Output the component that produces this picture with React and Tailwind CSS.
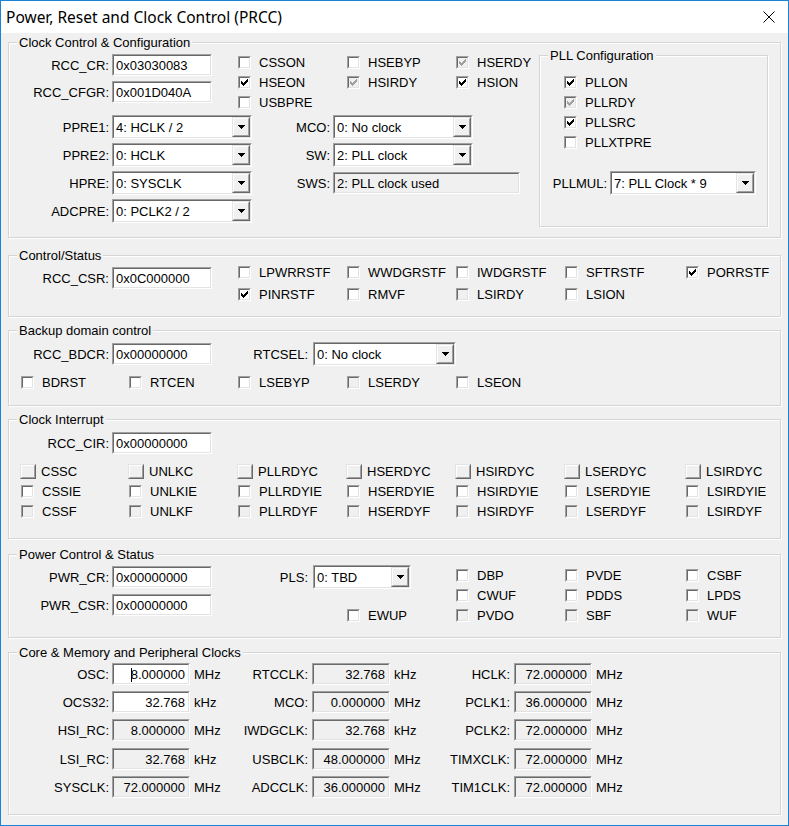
import React from "react";

const sunkOuter = "border border-t-[#a0a0a0] border-l-[#a0a0a0] border-r-white border-b-white";
const sunkInner = "border border-t-[#696969] border-l-[#696969] border-r-[#e3e3e3] border-b-[#e3e3e3]";
const raisedOuter = "border border-t-[#e3e3e3] border-l-[#e3e3e3] border-r-[#696969] border-b-[#696969]";
const raisedInner = "border border-t-white border-l-white border-r-[#a0a0a0] border-b-[#a0a0a0]";

// classic 7x7 pixel check mark
function Tick({ color }) {
  const cols = [2, 3, 4, 3, 2, 1, 0];
  return (
    <svg width="7" height="7" viewBox="0 0 7 7" shapeRendering="crispEdges" className="block">
      {cols.map((y, x) => (
        <rect key={x} x={x} y={y} width="1" height="3" fill={color} />
      ))}
    </svg>
  );
}

function DropArrow() {
  return (
    <svg width="7" height="4" viewBox="0 0 7 4" shapeRendering="crispEdges" className="block">
      <rect x="0" y="0" width="7" height="1" fill="#000" />
      <rect x="1" y="1" width="5" height="1" fill="#000" />
      <rect x="2" y="2" width="3" height="1" fill="#000" />
      <rect x="3" y="3" width="1" height="1" fill="#000" />
    </svg>
  );
}

function Box({ on, dis }) {
  return (
    <div className={`w-[13px] h-[13px] shrink-0 flex ${sunkOuter}`}>
      <div className={`flex-1 flex items-center justify-center ${sunkInner} ${dis ? "bg-[#f0f0f0]" : "bg-white"}`}>
        {on && <Tick color={dis ? "#a0a0a0" : "#000"} />}
      </div>
    </div>
  );
}

function Check({ label, on, dis }) {
  return (
    <div className="h-full flex items-center whitespace-nowrap">
      <Box on={on} dis={dis} />
      <span className="ml-[8px]">{label}</span>
    </div>
  );
}

function Push({ label }) {
  return (
    <div className="h-full flex items-center whitespace-nowrap -ml-[1px]">
      <div className={`w-[16px] h-[15px] shrink-0 flex ${raisedOuter}`}>
        <div className={`flex-1 bg-[#f0f0f0] ${raisedInner}`} />
      </div>
      <span className="ml-[5px]">{label}</span>
    </div>
  );
}

function Edit({ w, value, ro, right, caret }) {
  return (
    <div className={`${w} h-[22px] shrink-0 flex ${sunkOuter}`}>
      <div
        className={`flex-1 min-w-0 flex items-center whitespace-nowrap ${sunkInner} ${
          ro ? "bg-[#f0f0f0]" : "bg-white"
        } ${right ? "justify-end pr-[3px]" : "pl-[2px]"}`}
      >
        <span className="relative">
          {caret && <span className="absolute left-0 top-[1px] w-px h-[14px] bg-black" />}
          {value}
        </span>
      </div>
    </div>
  );
}

function Combo({ w, value }) {
  return (
    <div className={`${w} h-[24px] shrink-0 flex ${sunkOuter}`}>
      <div className={`flex-1 min-w-0 flex bg-white ${sunkInner}`}>
        <div className="flex-1 flex items-center pl-[2px] whitespace-nowrap overflow-hidden">{value}</div>
        <div className={`w-[18px] shrink-0 flex ${raisedOuter}`}>
          <div className={`flex-1 flex items-center justify-center bg-[#f0f0f0] ${raisedInner}`}>
            <DropArrow />
          </div>
        </div>
      </div>
    </div>
  );
}

function Label({ w, children }) {
  return <div className={`${w} shrink-0 text-right whitespace-nowrap`}>{children}</div>;
}

function Group({ title, className, children }) {
  return (
    <div
      className={`relative shrink-0 border border-[#d5d5d5] shadow-[inset_1px_1px_0_#fff,1px_1px_0_#fff] ${className}`}
    >
      <span className="absolute left-[8px] top-[-8px] px-[2px] bg-[#f0f0f0] leading-[15px] whitespace-nowrap">
        {title}
      </span>
      {children}
    </div>
  );
}

function RegField({ label, value }) {
  return (
    <div className="flex items-center h-[22px]">
      <Label w="w-[100px]">{label}</Label>
      <div className="ml-[3px]">
        <Edit w="w-[100px]" value={value} />
      </div>
    </div>
  );
}

// label / read-out / unit triple; widths per column so the boxes line up
const clockCols = [
  { lw: "w-[100px]", gap: "ml-[3px]", uw: "w-[34px]" },
  { lw: "w-[84px]", gap: "ml-[4px]", uw: "w-[40px]" },
  { lw: "w-[80px]", gap: "ml-[4px]", uw: "w-[40px]" },
];

function ClockCell({ col, label, value, unit, ro, caret }) {
  const c = clockCols[col];
  return (
    <div className="flex items-center h-[22px]">
      <Label w={c.lw}>{label}</Label>
      <div className={c.gap}>
        <Edit w="w-[78px]" value={value} ro={ro} right caret={caret} />
      </div>
      <div className={`${c.uw} pl-[4px] shrink-0 whitespace-nowrap`}>{unit}</div>
    </div>
  );
}

export default function App() {
  const interruptRows = [
    ["CSSC", "UNLKC", "PLLRDYC", "HSERDYC", "HSIRDYC", "LSERDYC", "LSIRDYC"],
    ["CSSIE", "UNLKIE", "PLLRDYIE", "HSERDYIE", "HSIRDYIE", "LSERDYIE", "LSIRDYIE"],
    ["CSSF", "UNLKF", "PLLRDYF", "HSERDYF", "HSIRDYF", "LSERDYF", "LSIRDYF"],
  ];

  const clocks = [
    [
      ["OSC:", "8.000000", "MHz", false, true],
      ["OCS32:", "32.768", "kHz", false],
      ["HSI_RC:", "8.000000", "MHz"],
      ["LSI_RC:", "32.768", "kHz"],
      ["SYSCLK:", "72.000000", "MHz"],
    ],
    [
      ["RTCCLK:", "32.768", "kHz"],
      ["MCO:", "0.000000", "MHz"],
      ["IWDGCLK:", "32.768", "kHz"],
      ["USBCLK:", "48.000000", "MHz"],
      ["ADCCLK:", "36.000000", "MHz"],
    ],
    [
      ["HCLK:", "72.000000", "MHz"],
      ["PCLK1:", "36.000000", "MHz"],
      ["PCLK2:", "72.000000", "MHz"],
      ["TIMXCLK:", "72.000000", "MHz"],
      ["TIM1CLK:", "72.000000", "MHz"],
    ],
  ];
  const rowGaps = ["", "mt-[6px]", "mt-[6px]", "mt-[7px]", "mt-[6px]"];

  return (
    <div className="w-[789px] h-[826px] overflow-hidden flex flex-col bg-[#f0f0f0] border border-[#1883d7] text-[13px] leading-[15px] text-black font-['Liberation_Sans',Arial,sans-serif]">
      {/* title bar */}
      <div className="h-[32px] shrink-0 bg-white flex items-center pl-[5px]">
        <span className="text-[15.5px] font-['Noto_Sans',sans-serif] text-black">
          Power, Reset and Clock Control (PRCC)
        </span>
        <svg width="12" height="12" viewBox="0 0 12 12" className="ml-auto mr-[13px] block">
          <path d="M0.5 0.5L11.5 11.5M11.5 0.5L0.5 11.5" stroke="#000" strokeWidth="1" fill="none" />
        </svg>
      </div>

      {/* Clock Control & Configuration */}
      <Group title="Clock Control & Configuration" className="mt-[9px] mx-[7px] h-[196px] flex">
        <div className="w-[530px] shrink-0 pt-[9px] flex flex-col">
          <div className="flex h-[60px]">
            <div className="w-[229px] shrink-0 pt-[2px] flex flex-col gap-[5px]">
              <RegField label="RCC_CR:" value="0x03030083" />
              <RegField label="RCC_CFGR:" value="0x001D040A" />
            </div>
            <div className="grid grid-cols-[109px_109px_109px] auto-rows-[20px]">
              <Check label="CSSON" />
              <Check label="HSEBYP" />
              <Check label="HSERDY" on dis />
              <Check label="HSEON" on />
              <Check label="HSIRDY" on dis />
              <Check label="HSION" on />
              <Check label="USBPRE" />
            </div>
          </div>
          <div className="mt-[1px] flex">
            <div className="w-[243px] shrink-0 flex flex-col">
              {[
                ["PPRE1:", "4: HCLK / 2"],
                ["PPRE2:", "0: HCLK"],
                ["HPRE:", "0: SYSCLK"],
                ["ADCPRE:", "0: PCLK2 / 2"],
              ].map(([l, v]) => (
                <div key={l} className="h-[28px] flex items-center">
                  <Label w="w-[100px]">{l}</Label>
                  <div className="ml-[3px]">
                    <Combo w="w-[140px]" value={v} />
                  </div>
                </div>
              ))}
            </div>
            <div className="flex flex-col">
              <div className="h-[28px] flex items-center">
                <Label w="w-[78px]">MCO:</Label>
                <div className="ml-[3px]">
                  <Combo w="w-[140px]" value="0: No clock" />
                </div>
              </div>
              <div className="h-[28px] flex items-center">
                <Label w="w-[78px]">SW:</Label>
                <div className="ml-[3px]">
                  <Combo w="w-[140px]" value="2: PLL clock" />
                </div>
              </div>
              <div className="h-[28px] flex items-center">
                <Label w="w-[78px]">SWS:</Label>
                <div className="ml-[3px]">
                  <Edit w="w-[187px]" value="2: PLL clock used" ro />
                </div>
              </div>
            </div>
          </div>
        </div>

        <Group title="PLL Configuration" className="mt-[12px] w-[229px] h-[172px] flex flex-col">
          <div className="pt-[16px] pl-[24px] grid auto-rows-[20px]">
            <Check label="PLLON" on />
            <Check label="PLLRDY" on dis />
            <Check label="PLLSRC" on />
            <Check label="PLLXTPRE" />
          </div>
          <div className="mt-[19px] h-[24px] flex items-center">
            <Label w="w-[67px]">PLLMUL:</Label>
            <div className="ml-[3px]">
              <Combo w="w-[146px]" value="7: PLL Clock * 9" />
            </div>
          </div>
        </Group>
      </Group>

      {/* Control/Status */}
      <Group title="Control/Status" className="mt-[17px] mx-[7px] h-[62px] flex">
        <div className="w-[229px] shrink-0 pt-[11px]">
          <RegField label="RCC_CSR:" value="0x0C000000" />
        </div>
        <div className="pt-[5px] grid grid-cols-[109px_109px_109px_121px_80px] auto-rows-[22px]">
          <Check label="LPWRRSTF" />
          <Check label="WWDGRSTF" />
          <Check label="IWDGRSTF" />
          <Check label="SFTRSTF" />
          <Check label="PORRSTF" on />
          <Check label="PINRSTF" on />
          <Check label="RMVF" />
          <Check label="LSIRDY" dis />
          <Check label="LSION" />
        </div>
      </Group>

      {/* Backup domain control */}
      <Group title="Backup domain control" className="mt-[13px] mx-[7px] h-[76px] flex flex-col">
        <div className="pt-[11px] h-[35px] flex items-end">
          <div className="h-[24px] flex items-center">
            <Label w="w-[100px]">RCC_BDCR:</Label>
            <div className="ml-[3px]">
              <Edit w="w-[100px]" value="0x00000000" />
            </div>
            <Label w="w-[96px]">RTCSEL:</Label>
            <div className="ml-[5px]">
              <Combo w="w-[143px]" value="0: No clock" />
            </div>
          </div>
        </div>
        <div className="mt-[6px] pl-[12px] h-[20px] grid grid-cols-[108px_109px_109px_109px_109px]">
          <Check label="BDRST" />
          <Check label="RTCEN" />
          <Check label="LSEBYP" />
          <Check label="LSERDY" dis />
          <Check label="LSEON" />
        </div>
      </Group>

      {/* Clock Interrupt */}
      <Group title="Clock Interrupt" className="mt-[13px] mx-[7px] h-[120px] flex flex-col">
        <div className="pt-[12px]">
          <RegField label="RCC_CIR:" value="0x00000000" />
        </div>
        <div className="mt-[7px] pl-[12px] grid grid-cols-[108px_109px_109px_109px_109px_121px_80px] auto-rows-[20px]">
          {interruptRows[0].map((t) => (
            <Push key={t} label={t} />
          ))}
          {interruptRows[1].map((t) => (
            <Check key={t} label={t} />
          ))}
          {interruptRows[2].map((t) => (
            <Check key={t} label={t} dis />
          ))}
        </div>
      </Group>

      {/* Power Control & Status */}
      <Group title="Power Control & Status" className="mt-[15px] mx-[7px] h-[84px] flex">
        <div className="w-[229px] shrink-0 pt-[11px] flex flex-col gap-[6px]">
          <RegField label="PWR_CR:" value="0x00000000" />
          <RegField label="PWR_CSR:" value="0x00000000" />
        </div>
        <div className="w-[218px] shrink-0 pt-[10px] flex flex-col">
          <div className="h-[24px] flex items-center">
            <Label w="w-[70px]">PLS:</Label>
            <div className="ml-[5px]">
              <Combo w="w-[98px]" value="0: TBD" />
            </div>
          </div>
          <div className="mt-[16px] h-[20px] pl-[109px]">
            <Check label="EWUP" />
          </div>
        </div>
        <div className="pt-[10px] grid grid-cols-[109px_121px_80px] auto-rows-[20px]">
          <Check label="DBP" />
          <Check label="PVDE" />
          <Check label="CSBF" />
          <Check label="CWUF" />
          <Check label="PDDS" />
          <Check label="LPDS" />
          <Check label="PVDO" dis />
          <Check label="SBF" dis />
          <Check label="WUF" dis />
        </div>
      </Group>

      {/* Core & Memory and Peripheral Clocks */}
      <Group title="Core & Memory and Peripheral Clocks" className="mt-[14px] mx-[7px] h-[163px] flex">
        {clocks.map((col, ci) => (
          <div key={ci} className="pt-[10px] flex flex-col">
            {col.map(([l, v, u, ro, caret], ri) => (
              <div key={l} className={rowGaps[ri]}>
                <ClockCell col={ci} label={l} value={v} unit={u} ro={ro !== false} caret={caret} />
              </div>
            ))}
          </div>
        ))}
      </Group>
    </div>
  );
}
